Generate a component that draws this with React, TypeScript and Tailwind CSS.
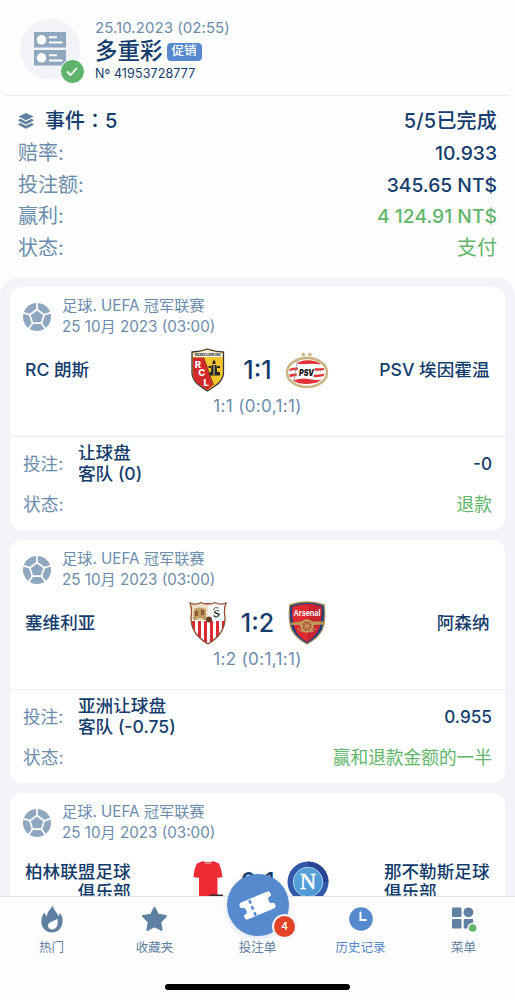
import { ReactNode } from "react";
import clsx from "clsx";

const LensCrest = () => (
  <svg width="34" height="44" viewBox="0 0 34 44">
    <path d="M1 4Q10 3.500 16.500 1Q23 3.500 32.500 4V25C32 34 24 38 16.500 43C9 38 1.500 34 1 25Z" fill="#f3c52e" stroke="#3f3a36" strokeWidth="1.300" />
    <path d="M2 9.500H12.500L22 37L16.500 42C9 37 2 34 2 25Z" fill="#d3282c" />
    <path d="M2 5Q10 4.500 16.500 2Q23 4.500 31.500 5V9H2Z" fill="#f1efe9" />
    <path d="M12.700 9.500L22.500 37" stroke="#6b1d17" strokeWidth=".8" />
    <text x="16.700" y="8" textAnchor="middle" fontSize="3" fontWeight="700" textLength="26" fill="#3a3a3a">RACING CLUB DE LENS</text>
    <text x="3.800" y="19.500" fontSize="9.500" fontWeight="800" fill="#fff">R</text>
    <text x="7.300" y="28.300" fontSize="9.500" fontWeight="800" fill="#fff">C</text>
    <text x="12.500" y="37.500" fontSize="9.500" fontWeight="800" fill="#fff">L</text>
    <path d="M21.500 14L23 11.500L24.500 14V16H21.500ZM20.500 17H25.500L26.500 27H19.800ZM17.500 18H20V20H17.500ZM26 18H29V20H26ZM18.500 24H29V27.500H18.500Z" fill="#29261f" />
    <path d="M23 17V27" stroke="#d8cfa0" strokeWidth="1" />
  </svg>
);

const PsvCrest = () => (
  <svg width="44" height="38" viewBox="0 0 44 38">
    <ellipse cx="22" cy="21.500" rx="20" ry="14.500" fill="#fff" stroke="#c4a873" strokeWidth="2.400" />
    <ellipse cx="22" cy="21.500" rx="20" ry="14.500" fill="none" stroke="#f2e8d2" strokeWidth="1" strokeDasharray="1 1.500" />
    <g fill="#e23438">
      <path d="M15 10.500Q22 8 31 10.500Q34 11.500 36 13.500Q28 12.500 22 13Q17 13.500 11.500 12.500Z" />
      <path d="M5 17.500Q9 16.500 13 16.500L12.500 19Q8 19 4 20Z" />
      <path d="M30 17Q35 17.500 38.500 17L39.500 19Q34 20 29.500 19.500Z" />
      <path d="M4 23.500Q8 22.500 12 22.500L11.500 25Q8 25.500 5 26Z" />
      <path d="M29 23.500Q35 24 39.500 22.500L38.500 25Q34 26.500 28.500 26Z" />
      <path d="M8 29.500Q16 26.500 24 28Q31 29.500 36.500 28.500L32 31.500Q23 34 13 32Z" />
    </g>
    <text x="21.500" y="24.700" textAnchor="middle" fontSize="9.500" fontWeight="900" fontStyle="italic" textLength="15" lengthAdjust="spacingAndGlyphs" fill="#141414">PSV</text>
    <path d="M12.500 9Q10.500 18 9 31" stroke="#888" strokeWidth=".7" fill="none" />
    <path d="M18.500 1L19.200 2.700L21 2.800L19.700 4L20.100 5.800L18.500 4.800L16.900 5.800L17.300 4L16 2.800L17.800 2.700ZM25 1L25.700 2.700L27.500 2.800L26.200 4L26.600 5.800L25 4.800L23.400 5.800L23.800 4L22.500 2.800L24.300 2.700Z" fill="#cdaf69" />
  </svg>
);

const SevillaCrest = () => (
  <svg width="38" height="44" viewBox="0 0 38 44">
    <clipPath id="sevilla">
      <path d="M1 2Q7 4.500 12 1.500Q15 3.500 19 2.500Q23 3.500 26 1.500Q31 4.500 37 2Q34.500 8 36 16C36.500 29 29 37 19 43C9 37 1.500 29 2 16Q3.500 8 1 2Z" />
    </clipPath>
    <g clipPath="url(#sevilla)">
      <path d="M0 0H38V44H0Z" fill="#fff" />
      <path d="M0 0H19V18H0Z" fill="#f0e0c8" />
      <path d="M3 20H6V44H3ZM9 20H12V44H9ZM15 20H18V44H15ZM21 20H24V44H21ZM27 20H30V44H27ZM33 20H36V44H33Z" fill="#dc2a35" />
      <path d="M5 8Q10 5 17 8V19H4Z" fill="#bd9a62" />
      <path d="M6 10H9V15H6ZM12 9H15V14H12Z" fill="#8f5638" />
      <path d="M8 17H14V19H8Z" fill="#e9cfa0" />
    </g>
    <text x="27.500" y="16" textAnchor="middle" fontFamily="Liberation Serif, serif" fontSize="11" fontWeight="700" fill="#343434">S</text>
    <path d="M24 9Q26 5 29.500 7M24 14.500Q28 19 31 12.500" stroke="#444" strokeWidth=".9" fill="none" />
    <circle cx="20" cy="18.500" r="3" fill="#6a3b20" />
    <path d="M1 2Q7 4.500 12 1.500Q15 3.500 19 2.500Q23 3.500 26 1.500Q31 4.500 37 2Q34.500 8 36 16C36.500 29 29 37 19 43C9 37 1.500 29 2 16Q3.500 8 1 2Z" fill="none" stroke="#8f4f32" strokeWidth="1.300" />
  </svg>
);

const ArsenalCrest = () => (
  <svg width="38" height="44" viewBox="0 0 38 44">
    <path d="M2 4Q10 1 19 1Q28 1 36 4Q38 19 34 29Q30 37 19 43Q8 37 4 29Q0 19 2 4Z" fill="#1b3d7d" stroke="#a08a58" strokeWidth="1.400" />
    <path d="M4.500 5.500Q11 3 19 3Q27 3 33.500 5.500Q34 19 31 28Q27 36 19 41Q10 36 7 28Q3 19 4.500 5.500Z" fill="#e02a32" />
    <path d="M20 3Q27 3 33.500 5.500Q34 19 31 28Q27 36 19 41Z" fill="#c9242f" />
    <text x="19" y="14.500" textAnchor="middle" fontFamily="Liberation Sans, sans-serif" fontSize="8.500" fontWeight="700" textLength="27" lengthAdjust="spacingAndGlyphs" fill="#fff">Arsenal</text>
    <path d="M2 22L12 20.500L37 20.500V23.500L26 24L4 24Z" fill="#b79a55" />
    <circle cx="19" cy="25" r="5.800" fill="#b04a3a" stroke="#c0a45e" strokeWidth="2" />
    <path d="M19 19V31M13 25H25M15 21L23 29M23 21L15 29" stroke="#c0a45e" strokeWidth="1" />
    <path d="M10 27Q12 31 15 31M28 27Q26 31 23 31" stroke="#c0a45e" strokeWidth="1" fill="none" />
  </svg>
);

const RedShirt = () => (
  <svg width="30" height="44" viewBox="0 0 30 44">
    <path d="M10 1Q15 3.500 20 1L26 3.500Q28.500 9 29.500 17L25 18L24.500 16V44H6V16L5.500 18L.5 17Q1 9 4 3.500Z" fill="#ee2b32" />
    <path d="M10.500 1.500Q15 6 19.500 1.500" stroke="#d9a5a5" strokeWidth="1" fill="none" />
    <path d="M16.500 34.500H30V36.500H16.500Z" fill="#372a30" />
  </svg>
);

const NapoliCrest = () => (
  <svg width="44" height="44" viewBox="0 0 44 44" className="ml-0.5">
    <defs>
      <linearGradient id="napoli" x1="0" y1="0" x2="1" y2="1">
        <stop stopColor="#5aa5dc" />
        <stop offset="1" stopColor="#4a93d2" />
      </linearGradient>
    </defs>
    <circle cx="22" cy="22" r="21.500" fill="#3358ab" />
    <path d="M22 .5A21.500 21.500 0 0 1 43.500 22H37A15 15 0 0 0 22 6Z" fill="#28438f" />
    <circle cx="22" cy="22" r="15.500" fill="url(#napoli)" stroke="#b7d9f2" strokeWidth=".9" />
    <text x="22" y="29.500" textAnchor="middle" fontFamily="Liberation Serif, serif" fontSize="24" stroke="#fff" strokeWidth=".5" fill="#fff">N</text>
  </svg>
);

const BallIcon = () => (
  <svg width="28" height="28" viewBox="0 0 28 28" className="shrink-0">
    <circle cx="14" cy="14" r="14" fill="#8fa8c0" />
    <g fill="none" stroke="#fff" strokeWidth="1.700" strokeLinejoin="round">
      <path d="M14 6.500L21.200 11.700L18.500 20.200H9.500L6.800 11.700Z" />
      <path d="M14 0V6.500M21.200 11.700L28 9.500M18.500 20.200L22.500 26M9.500 20.200L5.500 26M6.800 11.700L0 9.500" />
    </g>
  </svg>
);

const CouponIcon = () => (
  <svg width="32" height="34" viewBox="0 0 32 34">
    <path d="M0 0H32V15.500H0ZM0 18H32V33.500H0Z" fill="#8fa8c0" />
    <circle cx="7.500" cy="7.800" r="4.800" fill="#fff" />
    <circle cx="7.500" cy="25.800" r="4.800" fill="#fff" />
    <path d="M15 5.200H23M15 10.500H28.500M15 23.200H23M15 28.500H28.500" stroke="#fff" strokeWidth="2" />
  </svg>
);

const LayersIcon = () => (
  <svg width="16" height="16" viewBox="0 0 16 16" fill="#5f7f9f">
    <path d="M8 0L15.500 3.600L8 7.300L.5 3.600Z" />
    <path d="M.5 6.700L2.500 5.800L8 8.500L13.500 5.800L15.500 6.700V7.800L8 11.400L.5 7.800Z" />
    <path d="M.5 11L2.500 10.100L8 12.700L13.500 10.100L15.500 11V12.100L8 15.700L.5 12.100Z" />
  </svg>
);

const FlameIcon = () => (
  <svg width="24" height="28" viewBox="0 0 24 28" fill="#5f80a1">
    <path d="M12.700.5C13.500 5 17.500 7.500 18.500 11.500L20 8C22 10.500 23 13.500 22.500 17.500C21.800 23.500 17.500 27.500 12 27.500C6 27.500 1.500 23 1.300 17C1.200 13 2.500 10 4.200 7.500L6.800 12C7 6.500 10.500 4.500 12.700.5Z" />
    <path d="M17.300 13.800C15 16 8.200 16.500 8 20.500C8 23 10 24.500 12.500 24.500C17.500 24.200 18.300 18.500 17.300 13.800Z" fill="#fff" />
  </svg>
);

const StarIcon = () => (
  <svg width="27" height="26" viewBox="0 0 26 25">
    <path d="M13 1.800L16.400 8.500L24 9.700L18.500 15.300L19.800 23L13 19.400L6.200 23L7.500 15.300L2 9.700L9.600 8.500Z" fill="#5f80a1" stroke="#5f80a1" strokeWidth="2" strokeLinejoin="round" />
  </svg>
);

const ClockIcon = () => (
  <svg width="24" height="24" viewBox="0 0 24 24">
    <circle cx="12" cy="12" r="11.800" fill="#5689ce" />
    <path d="M11.500 5.500V13H17" stroke="#fff" strokeWidth="2" fill="none" strokeLinecap="round" />
  </svg>
);

const MenuIcon = () => (
  <svg width="26" height="26" viewBox="0 0 26 26">
    <g fill="#5f80a1">
      <rect x="1" y="1.500" width="9.500" height="9.500" rx="1" />
      <circle cx="17.400" cy="6.300" r="4.900" />
      <rect x="1" y="13" width="9.500" height="9.500" rx="1" />
      <rect x="12.700" y="13" width="9.500" height="9.500" rx="1" />
    </g>
    <circle cx="21.700" cy="22" r="5.300" fill="#fff" />
    <circle cx="21.700" cy="22" r="3.800" fill="#60b66b" />
  </svg>
);

const TicketIcon = () => (
  <svg width="37" height="31" viewBox="0 0 37 31">
    <g transform="translate(18.500 15.500) rotate(-23)">
      <path d="M-14-8.500H14Q16-8.500 16-6.500V-4.500A4.500 4.500 0 0 0 16 4.500V6.500Q16 8.500 14 8.500H-14Q-16 8.500-16 6.500V4.500A4.500 4.500 0 0 0-16-4.500V-6.500Q-16-8.500-14-8.500Z" fill="#fff" stroke="#fff" strokeWidth="1.200" strokeLinejoin="round" />
      <path d="M-5.500-7V8" stroke="#5689ce" strokeWidth="2.600" strokeLinecap="round" strokeDasharray="1.500 5" />
    </g>
  </svg>
);

const summary = [
  { label: "赔率:", value: "10.933" },
  { label: "投注额:", value: "345.65 NT$" },
  { label: "赢利:", value: "4 124.91 NT$", green: true },
  { label: "状态:", value: "支付", green: true },
];

type Match = {
  home: string[];
  away: string[];
  homeLogo: ReactNode;
  awayLogo: ReactNode;
  score: string;
  detail: string;
  bet: string[];
  odds: string;
  status: string;
};

const matches: Match[] = [
  {
    home: ["RC 朗斯"],
    away: ["PSV 埃因霍温"],
    homeLogo: <LensCrest />,
    awayLogo: <PsvCrest />,
    score: "1:1",
    detail: "1:1 (0:0,1:1)",
    bet: ["让球盘", "客队 (0)"],
    odds: "-0",
    status: "退款",
  },
  {
    home: ["塞维利亚"],
    away: ["阿森纳"],
    homeLogo: <SevillaCrest />,
    awayLogo: <ArsenalCrest />,
    score: "1:2",
    detail: "1:2 (0:1,1:1)",
    bet: ["亚洲让球盘", "客队 (-0.75)"],
    odds: "0.955",
    status: "赢和退款金额的一半",
  },
  {
    home: ["柏林联盟足球", "俱乐部"],
    away: ["那不勒斯足球", "俱乐部"],
    homeLogo: <RedShirt />,
    awayLogo: <NapoliCrest />,
    score: "0:1",
    detail: "",
    bet: [],
    odds: "",
    status: "",
  },
];

function TeamName({ lines, className }: { lines: string[]; className: string }) {
  return (
    <div className={clsx("text-[17.6px] leading-5 font-medium whitespace-nowrap", lines.length > 1 && "py-2", className)}>
      {lines.map((line) => (
        <div key={line}>{line}</div>
      ))}
    </div>
  );
}

function MatchCard({ match }: { match: Match }) {
  return (
    <div className="h-[243px] shrink-0 rounded-xl bg-white">
      <div className="flex items-center gap-[11px] px-[13px] pt-[9px] text-[15.2px] leading-[20.5px] text-[#6c8cac]">
        <BallIcon />
        <div>
          <div>足球. UEFA 冠军联赛</div>
          <div>25 10月 2023 (03:00)</div>
        </div>
      </div>

      <div className="mt-[11px] grid min-h-11 grid-cols-[1fr_44px_55px_44px_1fr] items-center">
        <TeamName lines={match.home} className="justify-self-start pl-[15px] text-right" />
        <div className="flex justify-center">{match.homeLogo}</div>
        <div className="text-center text-[25px] leading-7 font-medium">{match.score}</div>
        <div className="flex justify-center">{match.awayLogo}</div>
        <TeamName lines={match.away} className="justify-self-end pr-[15.5px]" />
      </div>

      {match.detail && (
        <>
          <div className="mt-0.5 text-center text-[17px] leading-6 tracking-[0.35px] text-[#6c8cac]">{match.detail}</div>
          <div className="mt-[18px] border-t border-[#e9edf3] px-[13px] pt-[5px]">
            <div className="flex items-center text-[17.6px] leading-[21px]">
              <div className="w-[55px] text-[#6c8cac]">投注:</div>
              <div className="font-medium">
                {match.bet.map((line) => (
                  <div key={line}>{line}</div>
                ))}
              </div>
              <div className="ml-auto text-[17.2px] font-medium">{match.odds}</div>
            </div>
            <div className="mt-[9px] flex justify-between text-[17.7px] leading-6">
              <span className="text-[#6c8cac]">状态:</span>
              <span className="text-[#62b56b]">{match.status}</span>
            </div>
          </div>
        </>
      )}
    </div>
  );
}

function NavItem({ icon, label, active }: { icon: ReactNode; label: string; active?: boolean }) {
  return (
    <div className={clsx("flex flex-1 flex-col items-center text-[12.5px] leading-4", active ? "text-[#5689ce]" : "text-[#5f80a1]")}>
      <div className="flex h-[43px] items-center justify-center">{icon}</div>
      {label}
    </div>
  );
}

export default function App() {
  return (
    <div className="flex h-[1000px] w-[515px] flex-col overflow-hidden bg-[#fdfdfe] font-['Inter','Noto_Sans_CJK_SC',sans-serif] text-[#143c6c]">
      {/* Coupon header */}
      <header className="mx-[5px] flex h-24 shrink-0 border-b border-[#e9ecf2] pt-[19px] pl-[15px]">
        <div className="relative flex size-[60px] items-center justify-center rounded-full bg-[#f1f3f9]">
          <CouponIcon />
          <div className="absolute top-[40px] left-[39.5px] flex size-[25px] items-center justify-center rounded-full border-[1.5px] border-white bg-[#60b36c]">
            <svg width="12" height="10" viewBox="0 0 12 10" fill="none">
              <path d="M1.500 5L4.500 8L10.500 1.500" stroke="#fff" strokeWidth="1.800" strokeLinecap="round" />
            </svg>
          </div>
        </div>
        <div className="ml-[15px]">
          <div className="text-[15px] leading-[18px] tracking-[0.06px] text-[#6c8cac]">25.10.2023 (02:55)</div>
          <div className="flex items-center gap-1">
            <span className="text-[22.5px] leading-[27px] font-medium">多重彩</span>
            <span className="mt-0.5 flex h-[18px] w-[35px] items-center justify-center rounded bg-[#5689ce] text-[12.5px] font-medium text-white">促销</span>
          </div>
          <div className="text-[12.5px] leading-5 tracking-[0.12px]">Nº 41953728777</div>
        </div>
      </header>

      {/* Summary */}
      <section className="h-[181px] shrink-0 px-[18px] pt-2 text-[20px] leading-8">
        <div className="flex items-center font-medium">
          <LayersIcon />
          <span className="ml-[11px]">
            事件<span className="font-['Noto_Sans_CJK_TC']">：</span>5
          </span>
          <span className="ml-auto tracking-[0.2px]">5/5已完成</span>
        </div>
        {summary.map((row) => (
          <div key={row.label} className="flex h-[31.7px] justify-between">
            <span className="text-[#6c8cac]">{row.label}</span>
            <span className={clsx(row.label === "状态:" ? "text-[20px]" : "text-[19.3px] font-medium", row.green && "text-[#62b56b]")}>{row.value}</span>
          </div>
        ))}
      </section>

      {/* Events */}
      <main className="flex min-h-0 flex-1 flex-col gap-2.5 overflow-hidden rounded-t-[20px] bg-[#f2f4f9] p-2.5">
        {matches.map((match) => (
          <MatchCard key={match.home[0]} match={match} />
        ))}
      </main>

      {/* Bottom navigation */}
      <nav className="relative h-[104px] shrink-0 border-t border-[#e2e7f0] bg-[#fdfdfe]">
        <div className="flex">
          <NavItem icon={<FlameIcon />} label="热门" />
          <NavItem icon={<StarIcon />} label="收藏夹" />
          <NavItem icon={null} label="投注单" />
          <NavItem icon={<ClockIcon />} label="历史记录" active />
          <NavItem icon={<MenuIcon />} label="菜单" />
        </div>
        <div className="absolute -top-[23px] left-[226.5px] flex size-[62px] items-center justify-center rounded-full bg-[#5689ce] shadow-[0_2px_7px_rgba(70,110,170,0.2)]">
          <TicketIcon />
          <div className="absolute top-[42px] left-[47.5px] flex size-[21px] items-center justify-center rounded-full bg-[#e34427] text-[10px] font-semibold text-white ring-2 ring-[#f1f4fa]">4</div>
        </div>
        <div className="mx-auto mt-[28px] h-1.5 w-[185px] rounded-full bg-black" />
      </nav>
    </div>
  );
}
